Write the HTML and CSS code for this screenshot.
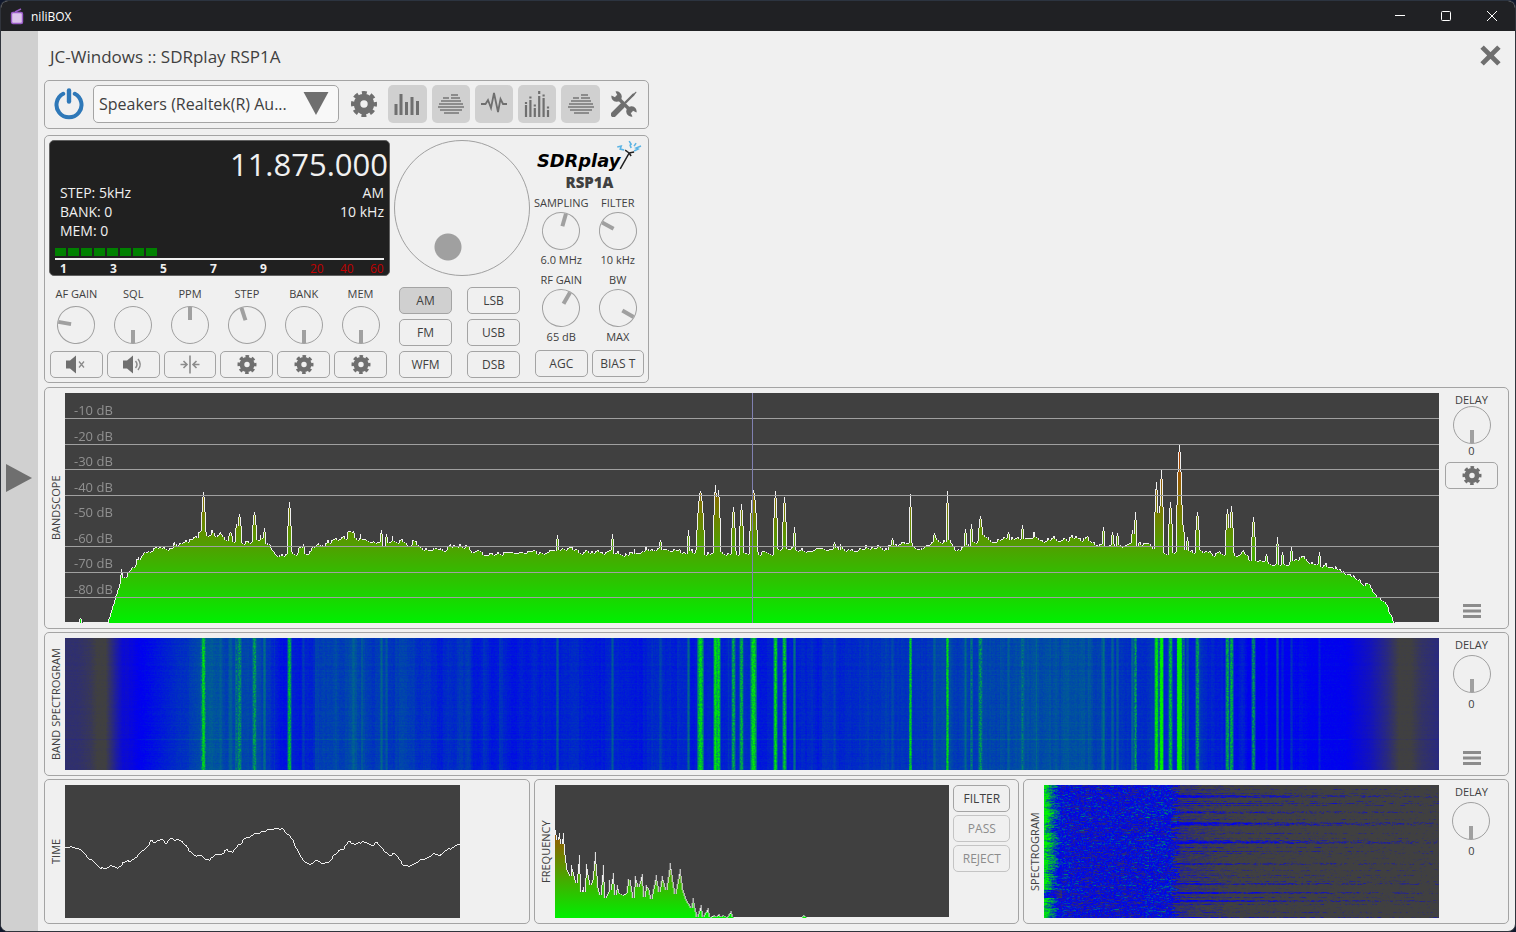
FILE: index.html
```
<!DOCTYPE html>
<html lang="en">
<head>
    <meta charset="UTF-8">
    <meta name="viewport" content="width=device-width, initial-scale=1.0">
    <title>niliBOX</title>
    <link rel="stylesheet" href="styles.css">
</head>
<body>
    <!-- Shared icons -->
    <svg class="icon-defs" aria-hidden="true">
        <symbol id="icon-gear" viewBox="0 0 26 26">
            <circle cx="13" cy="13" r="7" fill="none" stroke="currentColor" stroke-width="6.6"/>
            <circle cx="13" cy="13" r="11" fill="none" stroke="currentColor" stroke-width="4" stroke-dasharray="4.8 3.84" stroke-dashoffset="2.4"/>
        </symbol>
        <symbol id="icon-falls" viewBox="0 0 26 26">
            <path d="M13 4h7M5 7h6M13 7h9M3 10h20M1 13h24M0 16h26M2 19h22M6 22h15" stroke="currentColor" stroke-width="2"/>
        </symbol>
        <symbol id="icon-menu" viewBox="0 0 18 14">
            <path d="M0 1.5h18M0 7h18M0 12.5h18" stroke="#8c8c8c" stroke-width="3"/>
        </symbol>
    </svg>

    <div class="window">
        <div class="titlebar">
            <svg class="app-icon" viewBox="0 0 14 17">
                <path d="M5 4L11 1" stroke="#9a5cc8" stroke-width="1.4"/>
                <rect x="1.5" y="4.5" width="11" height="11" rx="1.5" fill="#dcc4ec" stroke="#9a5cc8" stroke-width="1.4"/>
            </svg>
            <span class="app-name">niliBOX</span>
            <button class="win-btn" aria-label="Minimize"><svg viewBox="0 0 10 10"><path d="M0 4.500h10"/></svg></button>
            <button class="win-btn" aria-label="Maximize"><svg viewBox="0 0 10 10"><rect x=".5" y=".5" width="9" height="9" rx="1"/></svg></button>
            <button class="win-btn" aria-label="Close"><svg viewBox="0 0 10 10"><path d="M0 0l10 10M10 0L0 10"/></svg></button>
        </div>

        <div class="content">
            <button class="drawer" aria-label="Open drawer">
                <svg viewBox="0 0 26 28"><path d="M0 0L26 14L0 28z" fill="#6f6f6f"/></svg>
            </button>

            <main>
                <header>
                    <h1>JC-Windows :: SDRplay RSP1A</h1>
                    <button class="close-btn" aria-label="Close receiver">
                        <svg viewBox="0 0 20 20"><path d="M2 2l16 16M18 2L2 18" stroke="#6f6f6f" stroke-width="4.6"/></svg>
                    </button>
                </header>

                <!-- Toolbar -->
                <section class="panel toolbar">
                    <button class="power" aria-label="Power">
                        <svg viewBox="0 0 30 32">
                            <path d="M9.2 5.8A12.5 12.5 0 1 0 20.8 5.8" fill="none" stroke="#2e78b8" stroke-width="4" stroke-linecap="round"/>
                            <path d="M15 2.500v11" stroke="#2e78b8" stroke-width="4.400" stroke-linecap="round"/>
                        </svg>
                    </button>
                    <div class="combo">
                        <select aria-label="Audio output">
                            <option>Speakers (Realtek(R) Au...</option>
                        </select>
                        <svg viewBox="0 0 26 24"><path d="M0 0h26L13 24z" fill="#6f6f6f"/></svg>
                    </div>
                    <button class="tool" aria-label="Settings"><svg><use href="#icon-gear"/></svg></button>
                    <button class="tool on" aria-label="Bandscope">
                        <svg viewBox="0 0 26 26"><path d="M2 24V13M7 24V3M12.500 24V11M18 24V6M23.500 24V10" stroke="currentColor" stroke-width="3"/></svg>
                    </button>
                    <button class="tool on light" aria-label="Band spectrogram"><svg><use href="#icon-falls"/></svg></button>
                    <button class="tool on" aria-label="Time">
                        <svg viewBox="0 0 26 26"><path d="M0 13h4.500l2.500-4 3 8 3-15 4 19 2.500-13 2.500 5h4" fill="none" stroke="currentColor" stroke-width="1.800"/></svg>
                    </button>
                    <button class="tool on" aria-label="Frequency">
                        <svg viewBox="0 0 26 26">
                            <path d="M2 26V14M6.400 26V9M10.800 26V17M15.200 26V5M19.600 26V7M24 26V19" stroke="currentColor" stroke-width="2.200"/>
                            <path d="M2 13v-2M6.400 7.500v-2M10.800 15.500v-2M15.200 3V0M19.600 5.500v-2M24 17.500v-2" stroke="currentColor" stroke-width="2.200"/>
                        </svg>
                    </button>
                    <button class="tool on light" aria-label="Spectrogram"><svg><use href="#icon-falls"/></svg></button>
                    <button class="tool" aria-label="Tools">
                        <svg viewBox="0 0 26 26">
                            <path d="M23 3L14 12" stroke="currentColor" stroke-width="2.400"/>
                            <path d="M20.500 4.500L25 .5 25.500 1.500 21.500 6z" fill="currentColor"/>
                            <path d="M11 15L2.500 23.500" stroke="currentColor" stroke-width="5.500" stroke-linecap="round"/>
                            <path d="M5 5l16 16" stroke="currentColor" stroke-width="3.400"/>
                            <path d="M4.500.5A5.200 5.200 0 1 1 .5 4.500L4.500 6.500 6.500 4.500zM21.500 25.500A5.200 5.200 0 1 1 25.500 21.500L21.500 19.500 19.500 21.500z" fill="currentColor"/>
                        </svg>
                    </button>
                </section>

                <!-- Receiver front panel -->
                <section class="panel radio">
                    <div class="col-left">
                        <div class="lcd">
                            <div class="lcd-freq">11.875.000</div>
                            <div class="lcd-info">
                                <div>STEP: 5kHz<br>BANK: 0<br>MEM: 0</div>
                                <div class="right">AM<br>10 kHz</div>
                            </div>
                            <div class="meter"><i></i><i></i><i></i><i></i><i></i><i></i><i></i><i></i></div>
                            <div class="scale">
                                <b>1</b><b>3</b><b>5</b><b>7</b><b>9</b><span>20</span><span>40</span><span>60</span>
                            </div>
                        </div>
                        <div class="knobs">
                            <div class="knob-cell">
                                <label for="af">AF GAIN</label>
                                <input type="range" class="knob" id="af" style="--angle: -80deg">
                                <button class="btn" aria-label="Mute">
                                    <svg viewBox="0 0 22 18"><path d="M1 5h4l6-5v18l-6-5H1z" fill="currentColor"/><path d="M14 6l5 6M19 6l-5 6" stroke="#8c8c8c" stroke-width="1.300"/></svg>
                                </button>
                            </div>
                            <div class="knob-cell">
                                <label for="sql">SQL</label>
                                <input type="range" class="knob" id="sql" style="--angle: 180deg">
                                <button class="btn" aria-label="Squelch">
                                    <svg viewBox="0 0 22 18"><path d="M1 5h4l6-5v18l-6-5H1z" fill="currentColor"/><path d="M13.500 5.500q3 3.500 0 7M16 3.500q4.500 5.500 0 11" fill="none" stroke="#8c8c8c" stroke-width="1.500"/></svg>
                                </button>
                            </div>
                            <div class="knob-cell">
                                <label for="ppm">PPM</label>
                                <input type="range" class="knob" id="ppm" style="--angle: 0deg">
                                <button class="btn" aria-label="Center">
                                    <svg viewBox="0 0 22 18"><path d="M11 0v18M1.500 9H8M4.500 5.500L8 9l-3.500 3.500M20.500 9H14M17.500 5.500L14 9l3.500 3.500" fill="none" stroke="#8c8c8c" stroke-width="1.600"/></svg>
                                </button>
                            </div>
                            <div class="knob-cell">
                                <label for="step">STEP</label>
                                <input type="range" class="knob" id="step" style="--angle: -18deg">
                                <button class="btn" aria-label="Step settings"><svg><use href="#icon-gear"/></svg></button>
                            </div>
                            <div class="knob-cell">
                                <label for="bank">BANK</label>
                                <input type="range" class="knob" id="bank" style="--angle: 180deg">
                                <button class="btn" aria-label="Bank settings"><svg><use href="#icon-gear"/></svg></button>
                            </div>
                            <div class="knob-cell">
                                <label for="mem">MEM</label>
                                <input type="range" class="knob" id="mem" style="--angle: 180deg">
                                <button class="btn" aria-label="Memory settings"><svg><use href="#icon-gear"/></svg></button>
                            </div>
                        </div>
                    </div>

                    <div class="col-mid">
                        <input type="range" class="wheel" aria-label="Tuning">
                        <div class="modes">
                            <button class="btn active">AM</button>
                            <button class="btn">LSB</button>
                            <button class="btn">FM</button>
                            <button class="btn">USB</button>
                            <button class="btn">WFM</button>
                            <button class="btn">DSB</button>
                        </div>
                    </div>

                    <div class="col-right">
                        <svg class="logo" viewBox="0 0 110 32">
                            <text x="2" y="27">SDRplay</text>
                            <path d="M86 29L95 13M91 10l4 3 5-1M95 13l2 3" fill="none" stroke="#222" stroke-width="1.500"/>
                            <path d="M83 7l4-1-1 3 4 1M95 1l2 3-1 1 1 3M107 6l-5 2 2 1-4 2M102 3l-2 3" fill="none" stroke="#5cb4e4" stroke-width="1.600"/>
                        </svg>
                        <h2>RSP1A</h2>
                        <div class="rf-knobs">
                            <div class="knob-cell">
                                <label for="sampling">SAMPLING</label>
                                <input type="range" class="knob" id="sampling" style="--angle: 16deg">
                                <output for="sampling">6.0 MHz</output>
                            </div>
                            <div class="knob-cell">
                                <label for="filter">FILTER</label>
                                <input type="range" class="knob" id="filter" style="--angle: -62deg">
                                <output for="filter">10 kHz</output>
                            </div>
                            <div class="knob-cell">
                                <label for="rfgain">RF GAIN</label>
                                <input type="range" class="knob" id="rfgain" style="--angle: 30deg">
                                <output for="rfgain">65 dB</output>
                            </div>
                            <div class="knob-cell">
                                <label for="bw">BW</label>
                                <input type="range" class="knob" id="bw" style="--angle: 120deg">
                                <output for="bw">MAX</output>
                            </div>
                            <button class="btn">AGC</button>
                            <button class="btn">BIAS T</button>
                        </div>
                    </div>
                </section>

                <!-- Bandscope -->
                <section class="panel scope">
                    <h3>BANDSCOPE</h3>
                    <div class="plot">
                        <canvas id="bandscope" width="1374" height="230"></canvas>
                        <div class="db-labels">
                            <span>-10 dB</span><span>-20 dB</span><span>-30 dB</span><span>-40 dB</span>
                            <span>-50 dB</span><span>-60 dB</span><span>-70 dB</span><span>-80 dB</span>
                        </div>
                    </div>
                    <div class="side tight">
                        <label for="delay1">DELAY</label>
                        <input type="range" class="knob" id="delay1" style="--angle: 180deg">
                        <output for="delay1">0</output>
                        <button class="btn" aria-label="Bandscope settings"><svg><use href="#icon-gear"/></svg></button>
                        <button class="menu" aria-label="Resize"><svg><use href="#icon-menu"/></svg></button>
                    </div>
                </section>

                <!-- Band spectrogram -->
                <section class="panel scope">
                    <h3>BAND SPECTROGRAM</h3>
                    <div class="plot"><canvas id="bandfall" width="1374" height="132"></canvas></div>
                    <div class="side">
                        <label for="delay2">DELAY</label>
                        <input type="range" class="knob" id="delay2" style="--angle: 180deg">
                        <output for="delay2">0</output>
                        <button class="menu" aria-label="Resize"><svg><use href="#icon-menu"/></svg></button>
                    </div>
                </section>

                <!-- Audio scopes -->
                <div class="audio">
                    <section class="panel scope">
                        <h3>TIME</h3>
                        <div class="plot"><canvas id="time" width="395" height="133"></canvas></div>
                        <div class="side"></div>
                    </section>
                    <section class="panel scope">
                        <h3>FREQUENCY</h3>
                        <div class="plot"><canvas id="freq" width="395" height="133"></canvas></div>
                        <div class="side filters">
                            <button class="btn">FILTER</button>
                            <button class="btn" disabled>PASS</button>
                            <button class="btn" disabled>REJECT</button>
                        </div>
                    </section>
                    <section class="panel scope">
                        <h3>SPECTROGRAM</h3>
                        <div class="plot"><canvas id="fall" width="395" height="133"></canvas></div>
                        <div class="side">
                            <label for="delay3">DELAY</label>
                            <input type="range" class="knob" id="delay3" style="--angle: 180deg">
                            <output for="delay3">0</output>
                        </div>
                    </section>
                </div>
            </main>
        </div>
    </div>

    <script src="script.js"></script>
</body>
</html>
```
FILE: styles.css
```
* {
    margin: 0;
    padding: 0;
    box-sizing: border-box;
}

body {
    font-family: "Open Sans", "Noto Sans", sans-serif;
    font-size: 11px;
    color: #404040;
    background-color: #10182c;
}

button {
    font: inherit;
    color: inherit;
    background: none;
    border: none;
    cursor: pointer;
}

svg {
    display: block;
}

.icon-defs {
    position: absolute;
    width: 0;
    height: 0;
}

.window {
    display: flex;
    flex-direction: column;
    min-height: 100vh;
    background-color: #f0f0f0;
    border: 1px solid #30343c;
    border-top-color: #2c3440;
    border-radius: 8px;
    overflow: hidden;
}

/* Title bar */
.titlebar {
    display: flex;
    align-items: center;
    height: 30px;
    padding-left: 9px;
    background-color: #202124;
    color: #fff;
    font-size: 12px;
}

.app-icon {
    width: 14px;
    height: 17px;
    margin-right: 7px;
}

.app-name {
    flex: 1;
}

.win-btn {
    display: flex;
    align-items: center;
    justify-content: center;
    width: 46px;
    height: 30px;
}

.win-btn svg {
    width: 10px;
    height: 10px;
    overflow: visible;
    fill: none;
    stroke: #fff;
}

.content {
    display: flex;
    flex: 1;
}

.drawer {
    display: flex;
    align-items: center;
    width: 37px;
    padding: 0 5px 6px;
    background-color: #d0d0d0;
}

.drawer svg {
    width: 26px;
    height: 28px;
}

main {
    flex: 1;
    min-width: 0;
    padding: 0 6px 7px;
}

header {
    display: flex;
    align-items: center;
    justify-content: space-between;
    height: 49px;
    padding: 0 8px 0 6px;
}

h1 {
    padding-top: 2px;
    font-size: 17px;
    font-weight: normal;
    line-height: 22px;
}

.close-btn svg {
    width: 21px;
    height: 21px;
}

.panel {
    border: 1px solid #a4a4a4;
    border-radius: 5px;
}

/* Toolbar */
.toolbar {
    display: flex;
    align-items: center;
    width: 605px;
    height: 49px;
    margin-bottom: 6px;
    padding: 0 5px 1px 9px;
}

.power svg {
    width: 30px;
    height: 32px;
}

.combo {
    position: relative;
    width: 246px;
    height: 38px;
    margin: 0 6px 0 9px;
}

.combo select {
    appearance: none;
    width: 100%;
    height: 100%;
    padding: 0 44px 0 5px;
    font: inherit;
    font-size: 16px;
    color: #404040;
    background-color: #f8f8f8;
    border: 1px solid #a4a4a4;
    border-radius: 5px;
}

.combo svg {
    position: absolute;
    top: 7px;
    right: 10px;
    width: 26px;
    height: 23px;
    pointer-events: none;
}

.tool {
    display: flex;
    flex: 1;
    align-items: center;
    justify-content: center;
    height: 38px;
    margin-right: 5px;
    border-radius: 5px;
    color: #6f6f6f;
}

.tool:last-child {
    margin-right: 0;
}

.tool.on {
    background-color: #d0d0d0;
}

.tool.light {
    color: #8c8c8c;
}

.tool svg {
    width: 26px;
    height: 26px;
}

/* Receiver */
.radio {
    display: flex;
    width: 605px;
    height: 248px;
    margin-bottom: 4px;
    padding: 4px;
}

.col-left {
    width: 341px;
    margin-right: 4px;
}

.lcd {
    height: 136px;
    padding: 4px 0 0 5px;
    background-color: #202020;
    border: 1px solid #606060;
    border-radius: 5px;
    color: #f0f0f0;
}

.lcd-freq {
    height: 38px;
    padding-right: 1px;
    font-size: 31px;
    line-height: 38px;
    text-align: right;
}

.lcd-info {
    display: flex;
    justify-content: space-between;
    height: 57px;
    margin-bottom: 8px;
    padding: 0 5px;
    font-size: 14px;
    line-height: 19px;
}

.lcd-info .right {
    text-align: right;
}

.meter {
    display: flex;
    gap: 2px;
    height: 12px;
    margin-right: 5px;
    border-bottom: 2px solid #f0f0f0;
}

.meter i {
    width: 11px;
    height: 8px;
    background-color: #008000;
}

.scale {
    display: flex;
    padding-left: 5px;
    font-size: 12px;
    line-height: 17px;
}

.scale b {
    flex: none;
    width: 50px;
}

.scale span {
    flex: none;
    width: 30px;
    color: #c00000;
}

.knobs {
    display: grid;
    grid-template-columns: repeat(6, minmax(0, 1fr));
    gap: 4px;
    margin: 10px 3px 0 1px;
}

.knob-cell {
    display: flex;
    flex-direction: column;
    align-items: center;
    line-height: 16px;
    white-space: nowrap;
}

.knob {
    appearance: none;
    width: 38px;
    height: 38px;
    border: 1px solid #a0a0a0;
    border-radius: 50%;
    background: linear-gradient(#a0a0a0, #a0a0a0) center top / 4px 13px no-repeat;
    transform: rotate(var(--angle));
}

.knob::-webkit-slider-thumb,
.wheel::-webkit-slider-thumb {
    appearance: none;
    width: 0;
    height: 0;
}

.knobs .knob {
    margin: 4px 0 7px;
}

.btn {
    display: flex;
    align-items: center;
    justify-content: center;
    width: 100%;
    height: 27px;
    border: 1px solid #a4a4a4;
    border-radius: 5px;
    font-size: 12px;
    line-height: 16px;
}

.btn svg {
    width: 22px;
    height: 19px;
    color: #6f6f6f;
}

.btn.active {
    background-color: #d0d0d0;
}

.btn:disabled {
    color: #8c8c8c;
    border-color: #c4c4c4;
}

.col-mid {
    width: 136px;
    margin-right: 5px;
}

.wheel {
    appearance: none;
    display: block;
    width: 136px;
    height: 136px;
    border: 1px solid #a0a0a0;
    border-radius: 50%;
    background: radial-gradient(circle at 53px 106px, #a0a0a0 13px, transparent 14px);
}

.modes {
    display: grid;
    grid-template-columns: 1fr 1fr;
    gap: 5px 15px;
    margin-top: 11px;
    padding: 0 10px 0 5px;
}

.col-right {
    width: 109px;
}

.logo {
    width: 109px;
    height: 32px;
}

.logo text {
    font-family: "DejaVu Sans", sans-serif;
    font-size: 18px;
    font-weight: bold;
    font-style: oblique;
    fill: #000;
}

h2 {
    font-size: 15px;
    font-weight: 800;
    line-height: 20px;
    text-align: center;
}

.rf-knobs {
    display: grid;
    grid-template-columns: repeat(2, minmax(0, 1fr));
    column-gap: 4px;
    margin-top: 3px;
}

.rf-knobs .knob-cell {
    height: 77px;
}

.rf-knobs .knob {
    margin: 1px 0 2px;
}

.rf-knobs .btn {
    margin-top: 1px;
}

/* Scopes */
.scope {
    display: flex;
    margin-bottom: 3px;
    padding: 5px 10px 5px 0;
}

h3 {
    width: 20px;
    font-size: 11px;
    font-weight: normal;
    line-height: 22px;
    text-align: center;
    writing-mode: vertical-rl;
    transform: rotate(180deg);
}

.plot {
    position: relative;
    flex: 1;
    min-width: 0;
}

.plot canvas {
    display: block;
    width: 100%;
    background-color: #404040;
}

#bandscope {
    height: 230px;
}

#bandfall {
    height: 132px;
}

.audio canvas {
    height: 133px;
}

.db-labels {
    position: absolute;
    top: 7px;
    left: 9px;
    display: flex;
    flex-direction: column;
    justify-content: space-between;
    height: 199px;
    color: #909090;
    font-size: 13px;
    line-height: 20px;
}

.side {
    display: flex;
    flex-direction: column;
    align-items: center;
    width: 53px;
    margin-left: 6px;
    line-height: 13px;
}

.side .knob {
    margin: 4px 0;
}

.side.tight .knob {
    margin: 0;
}

.side.tight .btn {
    margin-top: 5px;
}

.side .menu {
    margin-top: auto;
    padding-bottom: 5px;
}

.menu svg {
    width: 18px;
    height: 14px;
}

.audio {
    display: grid;
    grid-template-columns: repeat(3, minmax(0, 1fr));
    gap: 4px;
}

.audio .scope {
    margin-bottom: 0;
}

.side.filters {
    gap: 3px;
    width: 57px;
    margin-left: 4px;
    margin-right: -2px;
}
```
FILE: script.js
```
// Small seeded generator so the scopes look the same on every load
let seed = 7;
function rand() {
    seed = (seed * 1103515245 + 12345) % 2147483648;
    return seed / 2147483648;
}

// Noise floor of the band, [x, y]
const floorPoints = [
    [0, 230], [42, 230], [49, 203], [54, 194], [56, 176], [58, 185], [63, 180], [72, 170], [83, 155],
    [108, 155], [118, 152], [127, 148], [135, 143], [148, 143], [162, 147], [188, 149], [202, 150],
    [208, 158], [215, 165], [222, 162], [232, 163], [242, 159], [258, 149], [275, 148], [288, 144],
    [295, 147], [308, 150], [325, 152], [338, 148], [352, 154], [372, 159], [385, 153], [403, 152],
    [407, 161], [455, 160], [500, 158], [575, 161], [592, 154], [602, 157], [622, 160], [643, 159],
    [658, 160], [682, 161], [695, 160], [725, 159], [742, 159], [782, 157], [795, 154], [822, 154],
    [842, 151], [858, 154], [868, 148], [885, 147], [892, 155], [908, 150], [928, 147], [975, 146],
    [995, 145], [1015, 145], [1032, 149], [1062, 152], [1085, 154], [1098, 160], [1108, 159],
    [1125, 159], [1142, 158], [1158, 162], [1172, 164], [1177, 159], [1185, 169], [1208, 170],
    [1222, 172], [1232, 165], [1243, 168], [1252, 173], [1268, 174], [1278, 179], [1288, 185],
    [1302, 192], [1312, 202], [1320, 210], [1330, 230], [1374, 230]
];

// Stations, [x, y, width]
const peaks = [
    [15, 225, 1], [138, 99, 2], [155, 139, 1], [165, 139, 2], [171, 131, 1], [174, 121, 2], [189, 119, 2],
    [199, 135, 1], [224, 109, 2], [238, 151, 1], [288, 138, 1], [316, 137, 1], [321, 141, 1], [492, 142, 1],
    [547, 141, 1], [595, 147, 1], [623, 137, 1], [635, 98, 4], [650, 92, 2], [653, 97, 2], [668, 114, 2],
    [676, 111, 2], [688, 97, 4], [710, 98, 2], [719, 104, 2], [729, 134, 1], [769, 149, 1], [827, 145, 1],
    [845, 101, 1], [869, 140, 1], [882, 98, 1], [900, 136, 1], [906, 131, 1], [915, 123, 2], [943, 139, 1],
    [957, 132, 1], [1038, 134, 1], [1047, 139, 1], [1052, 140, 1], [1067, 137, 1], [1070, 119, 1],
    [1091, 89, 2], [1096, 77, 2], [1105, 109, 2], [1114, 52, 3], [1118, 132, 1], [1122, 144, 1],
    [1132, 119, 2], [1162, 116, 2], [1166, 113, 2], [1188, 124, 2], [1201, 161, 1], [1212, 144, 1],
    [1217, 159, 1], [1226, 154, 1], [1254, 159, 1]
];

const freqPoints = [
    [0, 45], [2, 55], [4, 48], [6, 59], [8, 48], [10, 70], [12, 85], [15, 91], [16, 80], [19, 91], [21, 98],
    [24, 70], [26, 107], [28, 102], [29, 107], [31, 79], [35, 100], [37, 95], [40, 67], [43, 103], [45, 110],
    [48, 80], [50, 113], [53, 107], [54, 95], [55, 105], [58, 88], [60, 110], [62, 100], [64, 108], [68, 110],
    [71, 108], [73, 94], [75, 95], [78, 113], [80, 91], [83, 102], [87, 89], [89, 112], [91, 100], [94, 105],
    [96, 114], [101, 90], [104, 107], [107, 91], [111, 105], [115, 78], [120, 109], [125, 84], [128, 105],
    [131, 114], [136, 123], [138, 113], [142, 132], [146, 120], [148, 132], [153, 123], [155, 132],
    [159, 130], [161, 132], [164, 129], [166, 132], [168, 130], [172, 132], [176, 126], [178, 132],
    [247, 132], [249, 130], [251, 132], [395, 132]
];

const timePoints = [
    [0, 63], [7, 61], [15, 65], [20, 71], [27, 77], [35, 83], [39, 84], [45, 81], [51, 83], [57, 78], [65, 75],
    [72, 70], [80, 63], [85, 56], [90, 57], [95, 53], [100, 58], [105, 54], [112, 55], [118, 58], [123, 65],
    [130, 71], [135, 70], [143, 76], [150, 68], [155, 69], [161, 65], [167, 67], [173, 60], [180, 53],
    [187, 50], [195, 47], [203, 45], [210, 43], [215, 43], [220, 48], [227, 55], [231, 65], [237, 75],
    [243, 79], [250, 76], [257, 78], [265, 75], [271, 67], [278, 63], [283, 57], [291, 58], [297, 56],
    [305, 60], [311, 58], [317, 65], [323, 70], [328, 68], [335, 77], [340, 81], [347, 79], [355, 75],
    [363, 72], [370, 68], [375, 70], [383, 64], [390, 61], [395, 59]
];

function interpolate(points, x) {
    for (let i = 1; i < points.length; i++) {
        const [x0, y0] = points[i - 1];
        const [x1, y1] = points[i];
        if (x <= x1) {
            return y0 + (y1 - y0) * (x - x0) / (x1 - x0);
        }
    }
    return points[points.length - 1][1];
}

function bandLevels(width, spread) {
    const levels = [];
    let bump = 0;
    for (let x = 0; x < width; x++) {
        const base = interpolate(floorPoints, x);
        if (x % 2 === 0) bump = bump * 0.6 + (rand() - 0.5) * 5;
        if (rand() > 0.98) bump -= 5;
        let y = base >= 229 ? base : base + bump;
        peaks.forEach(([px, py, w]) => {
            const d = Math.abs(x - px) / (w * spread + 1);
            if (d < 1) y = Math.min(y, base - (base - py) * (1 - d * d));
        });
        levels.push(Math.round(y));
    }
    return levels;
}

// Filled spectrum with a white outline
function drawSpectrum(ctx, levels, height) {
    const gradient = ctx.createLinearGradient(0, 0, 0, height);
    gradient.addColorStop(0, '#f00000');
    gradient.addColorStop(1, '#00f000');
    levels.forEach((y, x) => {
        ctx.fillStyle = gradient;
        ctx.fillRect(x, y, 1, height - y);
        const prev = x ? levels[x - 1] : y;
        const top = Math.min(y, prev);
        ctx.fillStyle = '#f0f0f0';
        ctx.fillRect(y > prev ? x - 1 : x, Math.min(top, height - 1), 1, Math.max(1, Math.abs(y - prev)));
    });
}

function drawBandscope() {
    const ctx = document.getElementById('bandscope').getContext('2d');
    drawSpectrum(ctx, bandLevels(1374, 1), 230);
    ctx.fillStyle = '#a0a0a0';
    [25, 51, 76, 102, 153, 179, 204].forEach(y => ctx.fillRect(0, y, 1374, 1));
    ctx.fillStyle = '#8080b0';
    ctx.fillRect(687, 0, 1, 230);
}

// t: -1 is idle grey, 0 is blue, 1 is green
function heatColor(t) {
    t = Math.max(-1, Math.min(1, t));
    if (t < 0) {
        return [-64 * t, -64 * t, 240 + 176 * t];
    }
    return [0, 240 * t, 240 * (1 - t)];
}

function paint(id, level) {
    const canvas = document.getElementById(id);
    const ctx = canvas.getContext('2d');
    const image = ctx.createImageData(canvas.width, canvas.height);
    for (let y = 0; y < canvas.height; y++) {
        for (let x = 0; x < canvas.width; x++) {
            const [r, g, b] = heatColor(level(x, y));
            const i = (y * canvas.width + x) * 4;
            image.data[i] = r;
            image.data[i + 1] = g;
            image.data[i + 2] = b;
            image.data[i + 3] = 255;
        }
    }
    ctx.putImageData(image, 0, 0);
}

function drawBandSpectrogram() {
    const levels = bandLevels(1374, 0.7);
    const left = [[0, -0.65], [24, -0.85], [32, -1], [40, -1], [50, -0.5], [60, -0.05], [75, 0], [135, 0.3]];
    const right = [[1250, 0.02], [1280, 0], [1305, -0.3], [1322, -0.65], [1334, -1], [1345, -1], [1356, -0.8], [1374, -0.65]];
    let row = 0;
    paint('bandfall', (x, y) => {
        if (x === 0) row = (rand() - 0.5) * 0.04 + (y === 101 ? 0.06 : 0);
        let t = (170 - levels[x]) / 80;
        if (x < 135) t = Math.min(t, interpolate(left, x));
        if (x > 1255) t = interpolate(right, x);
        if (x > 135 && x < 1250) t = Math.max(t, 0);
        if (t > 0.45) t += (rand() - 0.6) * 0.3;
        return t + row + (rand() - 0.5) * 0.06;
    });
}

function drawAudioSpectrogram() {
    const streaks = { 4: 0.3, 8: 0.4, 10: 0.7, 11: 0.9, 12: 0.6, 16: 0.4, 18: 0.8, 20: 0.6, 26: 0.5, 27: 0.7, 28: 0.3,
        34: 0.3, 37: 0.7, 38: 1, 39: 0.8, 40: 0.6, 48: 0.5, 53: 0.3, 55: 0.6, 56: 0.8, 57: 1, 58: 0.7, 62: 0.4,
        66: 0.6, 68: 0.3, 78: 0.6, 79: 0.5, 85: 0.3, 90: 0.4, 92: 0.3, 96: 0.4, 98: 0.7, 99: 0.7, 107: 0.9,
        108: 0.8, 112: 0.5, 115: 0.8, 116: 0.9, 119: 0.4, 127: 0.4, 132: 0.7 };
    let last = 0;
    let drift = 0;
    let edge = 133;
    paint('fall', (x, y) => {
        if (x === 0) {
            drift = drift * 0.8 + (rand() - 0.5) * 0.2;
            edge = 126 + rand() * 10;
        }
        last = last * 0.6 + (rand() - 0.5) * 0.8;
        if (x < 18) {
            return 0.95 - x * 0.06 + drift + last * 0.6 - (y > 104 && y < 113 ? 0.6 : 0);
        }
        if (x < edge) {
            let t = -0.14 + last * 0.9 + drift * 0.5;
            if (x < 26) t += 0.12;
            if (x > 100 && x < 128) t += 0.1;
            return t > 0 ? t * 0.85 : t;
        }
        const s = streaks[y] || 0.1;
        const fade = x < 250 ? 1 - (x - 133) / 400 : 0.65 - (x - 250) / 330;
        const near = x < 200 ? 0.3 * (200 - x) / 67 : 0;
        return Math.min(0, -1.15 + s * fade * 0.95 + near + (s > 0.2 ? last * 0.7 : last * 0.4));
    });
}

function drawTime() {
    const ctx = document.getElementById('time').getContext('2d');
    ctx.fillStyle = '#f0f0f0';
    let prev = 63;
    let wobble = 0;
    for (let x = 0; x < 395; x++) {
        if (x % 3 === 0) wobble = (rand() - 0.5) * 2;
        const y = Math.round(interpolate(timePoints, x) + wobble);
        ctx.fillRect(x, Math.min(y, prev), 1, Math.max(1, Math.abs(y - prev)));
        prev = y;
    }
}

function drawFrequency() {
    const ctx = document.getElementById('freq').getContext('2d');
    const levels = [];
    for (let x = 0; x < 395; x++) {
        levels.push(Math.round(interpolate(freqPoints, x)));
    }
    drawSpectrum(ctx, levels, 133);
}

drawBandscope();
drawBandSpectrogram();
drawTime();
drawFrequency();
drawAudioSpectrogram();
```
